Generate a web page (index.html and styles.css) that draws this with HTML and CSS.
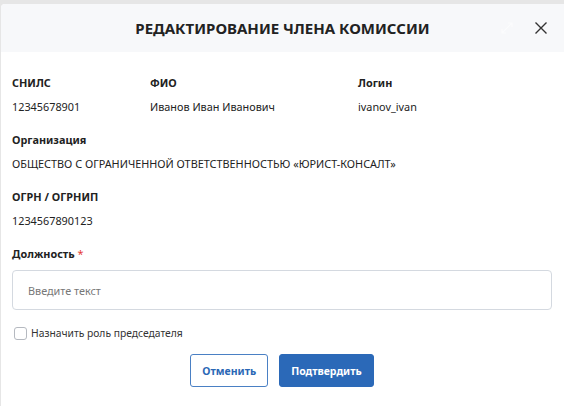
FILE: index.html
```html
<!DOCTYPE html>
<html lang="ru">
<head>
<meta charset="utf-8">
<link rel="stylesheet" href="styles.css">
</head>
<body>
<div class="modal">
  <div class="modal-header">
    <h1 class="modal-title">Редактирование члена комиссии</h1>
    <div class="header-actions">
      <svg class="icon-expand" width="14" height="14" viewBox="0 0 14 14"><path d="M2 12L12 2M8 2h4v4M2 8v4h4" fill="none" stroke="#ffffff" stroke-width="1.2"/></svg>
      <svg class="icon-close" width="14" height="14" viewBox="0 0 14 14"><path d="M1.5 1.5l11 11M12.5 1.5l-11 11" fill="none" stroke="#333" stroke-width="1.4"/></svg>
    </div>
  </div>
  <div class="modal-body">
    <div class="row-3">
      <div class="field"><div class="label">СНИЛС</div><div class="value">12345678901</div></div>
      <div class="field"><div class="label">ФИО</div><div class="value">Иванов Иван Иванович</div></div>
      <div class="field"><div class="label">Логин</div><div class="value">ivanov_ivan</div></div>
    </div>
    <div class="field"><div class="label">Организация</div><div class="value">ОБЩЕСТВО С ОГРАНИЧЕННОЙ ОТВЕТСТВЕННОСТЬЮ «ЮРИСТ-КОНСАЛТ»</div></div>
    <div class="field"><div class="label">ОГРН / ОГРНИП</div><div class="value">1234567890123</div></div>
    <div class="field field-input">
      <div class="label">Должность <span class="req">*</span></div>
      <input class="input" type="text" placeholder="Введите текст">
    </div>
    <label class="check"><span class="box"></span>Назначить роль председателя</label>
    <div class="actions">
      <button class="btn btn-outline">Отменить</button>
      <button class="btn btn-primary">Подтвердить</button>
    </div>
  </div>
</div>
</body>
</html>
```

FILE: styles.css
```css
* { box-sizing: border-box; }
html, body { margin: 0; padding: 0; }
body {
  background: #e6e6e6;
  font-family: "Noto Sans", sans-serif;
  color: #222;
  width: 564px;
  height: 406px;
  overflow: hidden;
  padding-top: 4px;
  padding-left: 1px;
}
.modal {
  background: #fff;
  border-radius: 4px 0 0 0;
  height: 402px;
}
.modal-header {
  height: 48px;
  background: #f7f8fa;
  border-radius: 4px 0 0 0;
  display: flex;
  align-items: center;
  justify-content: center;
  position: relative;
}
.modal-title {
  margin: 0;
  font-size: 15px;
  font-weight: 700;
  text-transform: uppercase;
  color: #222;
  letter-spacing: 0;
}
.header-actions {
  position: absolute;
  right: 16px;
  top: 17px;
  display: flex;
  gap: 20px;
  align-items: center;
}
.icon-expand { opacity: 0.6; }
.modal-body {
  padding: 23px 12px 0 11px;
  display: flex;
  flex-direction: column;
}
.row-3 {
  display: grid;
  grid-template-columns: 138px 208px 1fr;
}
.field { margin-bottom: 18px; }
.field-input { margin-bottom: 16px; }
.label {
  font-size: 10.85px;
  font-weight: 700;
  line-height: 15px;
  color: #222;
  margin-bottom: 9px;
}
.value {
  font-size: 10.85px;
  line-height: 15px;
  color: #222;
}
.req { color: #e53935; font-weight: 400; }
.input {
  display: block;
  width: 540px;
  height: 40px;
  border: 1px solid #d4d9e0;
  border-radius: 4px;
  padding: 0 15px;
  font: 10.85px "Noto Sans", sans-serif;
  color: #222;
  outline: none;
}
.input::placeholder { color: #777; }
.check {
  display: flex;
  align-items: center;
  gap: 4px;
  font-size: 10.3px;
  color: #333;
  margin: 0 0 0 2px;
}
.box {
  width: 13px;
  height: 13px;
  border: 1px solid #b5b9c0;
  border-radius: 3px;
  background: #fff;
}
.actions {
  display: flex;
  justify-content: center;
  gap: 11px;
  margin-top: 14px;
}
.btn {
  height: 33px;
  border-radius: 3px;
  font: 700 10.5px "Noto Sans", sans-serif;
  padding: 0 11px;
}
.btn-outline {
  background: #fff;
  color: #2a67b5;
  border: 1px solid #4a80c4;
}
.btn-primary {
  background: #2b69b8;
  color: #fff;
  border: 1px solid #2b69b8;
}
```
